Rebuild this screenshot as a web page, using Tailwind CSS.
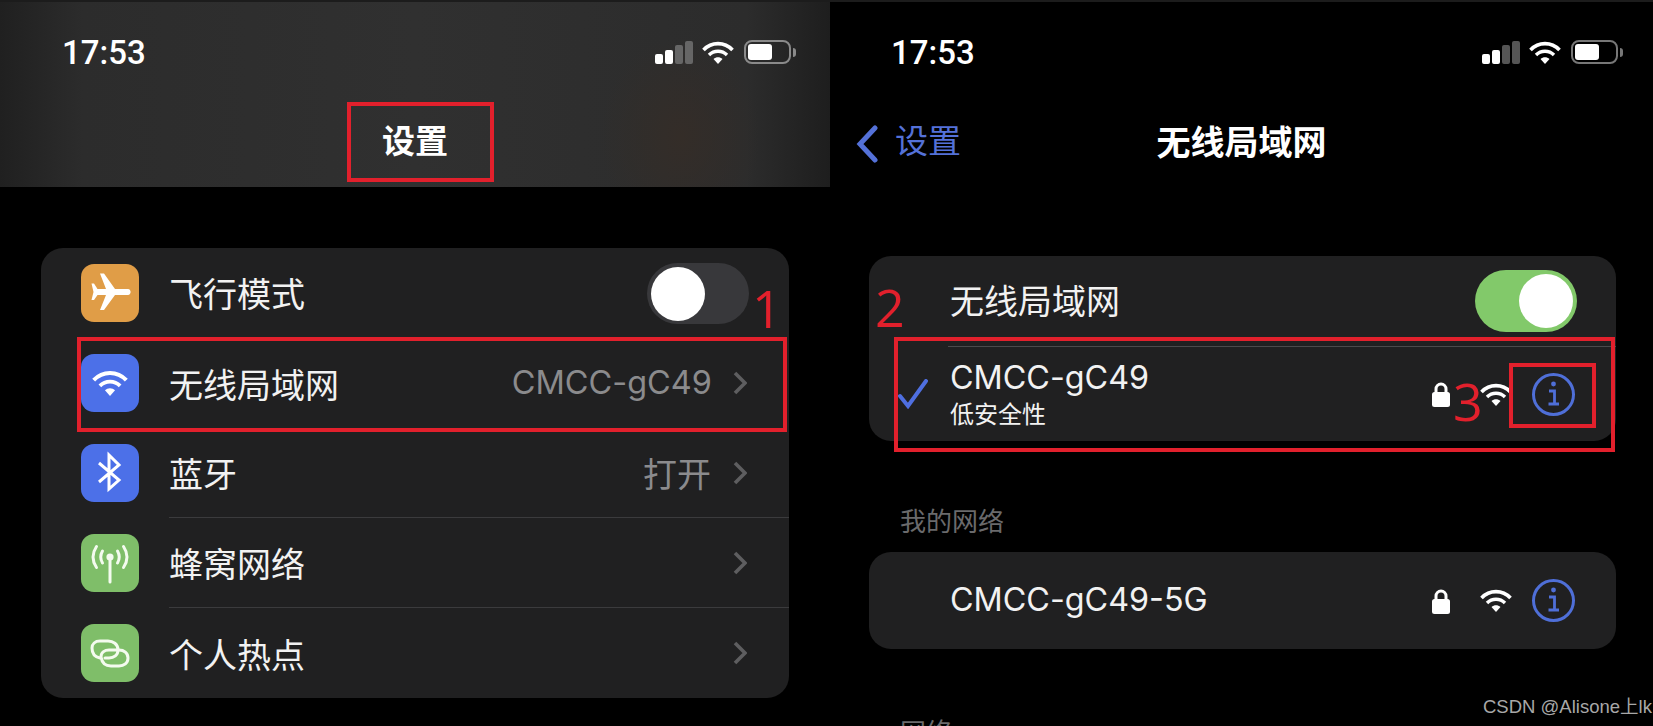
<!DOCTYPE html>
<html lang="zh-CN">
<head>
  <meta charset="UTF-8">
  <meta name="viewport" content="width=device-width, initial-scale=1.0">
  <script src="https://cdn.jsdelivr.net/npm/@tailwindcss/browser@4"></script>
  <title>无线局域网</title>
</head>
<body class="bg-black overflow-hidden font-['Inter','Noto_Sans_CJK_SC',sans-serif] text-[#f2f2f2]">
  <svg class="hidden">
    <symbol id="wifi" viewBox="0 0 32 23">
      <path d="M1.5 9C9.5 .5 22.5 .5 30.5 9" fill="none" stroke="currentColor" stroke-width="3.6"/>
      <path d="M7 14C12 9 20 9 25 14" fill="none" stroke="currentColor" stroke-width="3.4"/>
      <path d="M11.5 18C14 15.5 18 15.5 20.5 18L16 23Z" fill="currentColor"/>
    </symbol>
    <symbol id="lock" viewBox="0 0 18 26">
      <path d="M4 13V8a5 5 0 0 1 10 0V13" fill="none" stroke="currentColor" stroke-width="3"/>
      <rect x="0" y="11" width="18" height="15" rx="2.5" fill="currentColor"/>
    </symbol>
    <symbol id="info" viewBox="0 0 43 43">
      <circle cx="21.5" cy="21.5" r="20" fill="none" stroke="currentColor" stroke-width="3"/>
      <circle cx="21.5" cy="11" r="2.4" fill="currentColor"/>
      <path d="M17 18H22.5V31M16.5 31H27" fill="none" stroke="currentColor" stroke-width="2.8"/>
    </symbol>
    <symbol id="chevron" viewBox="0 0 14 24">
      <path d="M2 2L12 12L2 22" fill="none" stroke="currentColor" stroke-width="3.6"/>
    </symbol>
  </svg>

  <div class="flex w-[1653px] h-[726px]">
    <!-- left phone: settings -->
    <div class="relative w-[830px] h-[726px] overflow-hidden">
      <div class="h-[187px] pt-[38px] border-t-2 border-[#1c1c1c] bg-[radial-gradient(ellipse_80px_100px_at_680px_135px,#342d28_0%,transparent_100%),linear-gradient(90deg,#202020_0%,#2c2c2c_10%,#303030_50%,#2c2c2c_90%,#1e1e1e_100%)]">
        <div class="flex items-center justify-between h-[24px] pl-[62px] pr-[34px]">
          <span class="font-['Roboto'] font-medium text-[33px] leading-none text-white">17:53</span>
          <div class="flex items-center">
            <div class="flex items-end gap-[2px] h-[23px]">
              <div class="w-[8px] h-[10px] rounded-[2px] bg-white"></div>
              <div class="w-[8px] h-[14px] rounded-[2px] bg-white"></div>
              <div class="w-[8px] h-[19px] rounded-[2px] bg-[#666666]"></div>
              <div class="w-[8px] h-[23px] rounded-[2px] bg-[#666666]"></div>
            </div>
            <svg class="w-[32px] h-[23px] ml-[9px] text-white"><use href="#wifi"/></svg>
            <div class="w-[47px] h-[24px] ml-[10px] p-[2px] border-2 border-[#8a8a8a] rounded-[8px]">
              <div class="w-[24px] h-full rounded-[3px] bg-white"></div>
            </div>
            <div class="w-[3px] h-[9px] ml-[2px] rounded-r-[3px] bg-[#8a8a8a]"></div>
          </div>
        </div>
        <div class="mt-[56px] h-[40px] flex items-center justify-center text-[33px] font-['Noto_Sans_CJK_SC'] font-semibold text-white">设置</div>
      </div>

      <div class="mt-[61px] ml-[41px] w-[748px] h-[450px] rounded-[22px] bg-[#202021] text-[34px] font-['Noto_Sans_CJK_SC']">
        <div class="flex items-center h-[90px] pl-[40px]">
          <div class="w-[58px] h-[58px] rounded-[13px] bg-[#e09d47]">
            <svg viewBox="0 0 58 58" class="w-full h-full"><path fill="#ffffff" d="M47 25H34L23 9.5H19L25 25H16.5L13 19.5H10.5L12.5 28L10.5 36H13L16.5 31H25L19 46H23L34 31H47C50.5 31 50.5 25 47 25Z"/></svg>
          </div>
          <span class="ml-[30px] -mt-[2px]">飞行模式</span>
          <div class="ml-auto mr-[40px] w-[102px] h-[61px] p-[4px] rounded-full bg-[#38383b]">
            <div class="w-[54px] h-[54px] rounded-full bg-white"></div>
          </div>
        </div>
        <div class="flex items-center h-[90px] pl-[40px]">
          <div class="w-[58px] h-[58px] rounded-[13px] bg-[#4c70e8] flex items-center justify-center">
            <svg class="w-[36px] h-[26px] text-white"><use href="#wifi"/></svg>
          </div>
          <span class="ml-[30px]">无线局域网</span>
          <span class="ml-auto font-['Inter'] text-[#8b8b8d] text-[32.5px]">CMCC-gC49</span>
          <svg class="w-[14px] h-[24px] ml-[21px] mr-[42px] text-[#5e5e60]"><use href="#chevron"/></svg>
        </div>
        <div class="flex items-center h-[90px] pl-[40px]">
          <div class="w-[58px] h-[58px] rounded-[13px] bg-[#4c70e8]">
            <svg viewBox="0 0 58 58" class="w-full h-full"><path fill="none" stroke="#ffffff" stroke-width="3" d="M18 19L38 36L28 45V11L38 21L18 38"/></svg>
          </div>
          <div class="flex-1 flex items-center h-full ml-[30px] border-b border-[#3b3b3d]">
            <span>蓝牙</span>
            <span class="ml-auto text-[#8b8b8d] text-[34px]">打开</span>
            <svg class="w-[14px] h-[24px] ml-[22px] mr-[42px] text-[#5e5e60]"><use href="#chevron"/></svg>
          </div>
        </div>
        <div class="flex items-center h-[90px] pl-[40px]">
          <div class="w-[58px] h-[58px] rounded-[13px] bg-[#7fbe69]">
            <svg viewBox="0 0 58 58" class="w-full h-full"><g fill="none" stroke="#f4fbef" stroke-width="3" stroke-linecap="round"><path d="M29 24V48"/><path d="M21.5 17Q18 23 21.5 29M15.5 12.5Q8.5 23 15.5 33.5M36.5 17Q40 23 36.5 29M42.5 12.5Q49.5 23 42.5 33.5"/></g><circle cx="29" cy="23" r="3.6" fill="#f4fbef"/></svg>
          </div>
          <div class="flex-1 flex items-center h-full ml-[30px] border-b border-[#3b3b3d]">
            <span>蜂窝网络</span>
            <svg class="w-[14px] h-[24px] ml-auto mr-[42px] text-[#5e5e60]"><use href="#chevron"/></svg>
          </div>
        </div>
        <div class="flex items-center h-[90px] pl-[40px]">
          <div class="w-[58px] h-[58px] rounded-[13px] bg-[#7fbe69]">
            <svg viewBox="0 0 58 58" class="w-full h-full"><g fill="none" stroke="#f4fbef" stroke-width="3" stroke-linecap="round"><path d="M37 26C37 20 32 17 27 17H19C14 17 11 20 11 24C11 30 14 33 19 34"/><path d="M20 33C20 28 24 26 28 26H38C43 26 47 29 47 34C47 39 43 42 38 42H30C25 42 21 39 20 33Z"/><path d="M37 26C37 31 33 34 28 34H24"/></g></svg>
          </div>
          <span class="ml-[30px]">个人热点</span>
          <svg class="w-[14px] h-[24px] ml-auto mr-[42px] text-[#5e5e60]"><use href="#chevron"/></svg>
        </div>
      </div>

      <!-- annotations -->
      <div class="absolute left-[347px] top-[102px] w-[147px] h-[80px] border-4 border-[#e2202c]"></div>
      <div class="absolute left-[77px] top-[337px] w-[710px] h-[95px] border-4 border-[#e2202c]"></div>
      <span class="absolute left-[752px] top-[272px] font-['Open_Sans'] text-[52px] leading-[71px] text-[#e2202c]">1</span>
    </div>

    <!-- right phone: wifi -->
    <div class="relative w-[823px] h-[726px] overflow-hidden">
      <div class="h-[187px] pt-[38px] border-t-2 border-[#1c1c1c]">
        <div class="flex items-center justify-between h-[24px] pl-[61px] pr-[30px]">
          <span class="font-['Roboto'] font-medium text-[33px] leading-none text-white">17:53</span>
          <div class="flex items-center">
            <div class="flex items-end gap-[2px] h-[23px]">
              <div class="w-[8px] h-[10px] rounded-[2px] bg-white"></div>
              <div class="w-[8px] h-[14px] rounded-[2px] bg-white"></div>
              <div class="w-[8px] h-[19px] rounded-[2px] bg-[#555555]"></div>
              <div class="w-[8px] h-[23px] rounded-[2px] bg-[#555555]"></div>
            </div>
            <svg class="w-[32px] h-[23px] ml-[9px] text-white"><use href="#wifi"/></svg>
            <div class="w-[47px] h-[24px] ml-[10px] p-[2px] border-2 border-[#777777] rounded-[8px]">
              <div class="w-[24px] h-full rounded-[3px] bg-white"></div>
            </div>
            <div class="w-[3px] h-[9px] ml-[2px] rounded-r-[3px] bg-[#777777]"></div>
          </div>
        </div>
        <div class="relative mt-[56px] h-[40px] flex items-center justify-center text-[34px] font-['Noto_Sans_CJK_SC'] font-semibold text-white">
          无线局域网
          <div class="absolute left-[26px] top-0 h-[40px] flex items-center text-[33px] font-normal text-[#5471d8]">
            <svg viewBox="0 0 22 38" class="w-[22px] h-[38px] mt-[8px]"><path d="M19 3L4 19L19 35" fill="none" stroke="currentColor" stroke-width="5" stroke-linecap="round"/></svg>
            <span class="ml-[17px]">设置</span>
          </div>
        </div>
      </div>

      <div class="mt-[69px] ml-[39px] w-[747px] h-[185px] rounded-[22px] bg-[#202021]">
        <div class="flex items-center h-[90px] pl-[81px]">
          <span class="text-[34px] font-['Noto_Sans_CJK_SC'] -mt-[3px]">无线局域网</span>
          <div class="ml-auto mr-[39px] flex justify-end w-[102px] h-[62px] p-[4px] rounded-full bg-[#82c96a]">
            <div class="w-[54px] h-[54px] rounded-full bg-white"></div>
          </div>
        </div>
        <div class="h-[95px] ml-[79px] border-t border-[#4a4a4c] flex items-center pl-[2px] relative">
          <div class="flex flex-col">
            <span class="text-[32.3px] leading-[40px] -mt-[2px]">CMCC-gC49</span>
            <span class="text-[24px] leading-[30px] font-['Noto_Sans_CJK_SC']">低安全性</span>
          </div>
          <svg viewBox="0 0 30 30" class="absolute left-[-50px] top-[32px] w-[30px] h-[30px] text-[#4f6fe0]"><path d="M2 17L10 27L28 2" fill="none" stroke="currentColor" stroke-width="4" stroke-linecap="round"/></svg>
          <div class="ml-auto mr-[41px] flex items-center">
            <svg class="w-[18px] h-[26px] text-white"><use href="#lock"/></svg>
            <svg class="w-[32px] h-[23px] ml-[30px] text-white"><use href="#wifi"/></svg>
            <svg class="w-[43px] h-[43px] ml-[20px] text-[#4f6fd8]"><use href="#info"/></svg>
          </div>
        </div>
      </div>

      <div class="ml-[70px] mt-[63px] h-[30px] flex items-center text-[26px] text-[#6a6a6c] font-['Noto_Sans_CJK_SC']">我的网络</div>
      <div class="mt-[18px] ml-[39px] w-[747px] h-[97px] rounded-[22px] bg-[#202021] flex items-center pl-[81px]">
        <span class="text-[32.3px]">CMCC-gC49-5G</span>
        <div class="ml-auto mr-[41px] flex items-center">
          <svg class="w-[18px] h-[26px] text-white"><use href="#lock"/></svg>
          <svg class="w-[32px] h-[23px] ml-[30px] text-white"><use href="#wifi"/></svg>
          <svg class="w-[43px] h-[43px] ml-[20px] text-[#4f6fd8]"><use href="#info"/></svg>
        </div>
      </div>
      <div class="ml-[70px] mt-[66px] h-[30px] flex items-center text-[26px] text-[#6a6a6c] font-['Noto_Sans_CJK_SC']">网络</div>

      <!-- annotations -->
      <div class="absolute left-[64px] top-[337px] w-[721px] h-[115px] border-4 border-[#e2202c]"></div>
      <div class="absolute left-[679px] top-[363px] w-[87px] h-[65px] border-4 border-[#e2202c]"></div>
      <span class="absolute left-[45px] top-[271px] font-['Open_Sans'] text-[52px] leading-[71px] text-[#e2202c]">2</span>
      <span class="absolute left-[623px] top-[365px] font-['Open_Sans'] text-[52px] leading-[71px] text-[#e2202c]">3</span>
      <span class="absolute left-[653px] top-[696px] text-[18.5px] leading-[22px] whitespace-nowrap text-[#a8a8a8] font-['Liberation_Sans','Noto_Sans_CJK_SC']">CSDN @Alisone上lk</span>
    </div>
  </div>
</body>
</html>
